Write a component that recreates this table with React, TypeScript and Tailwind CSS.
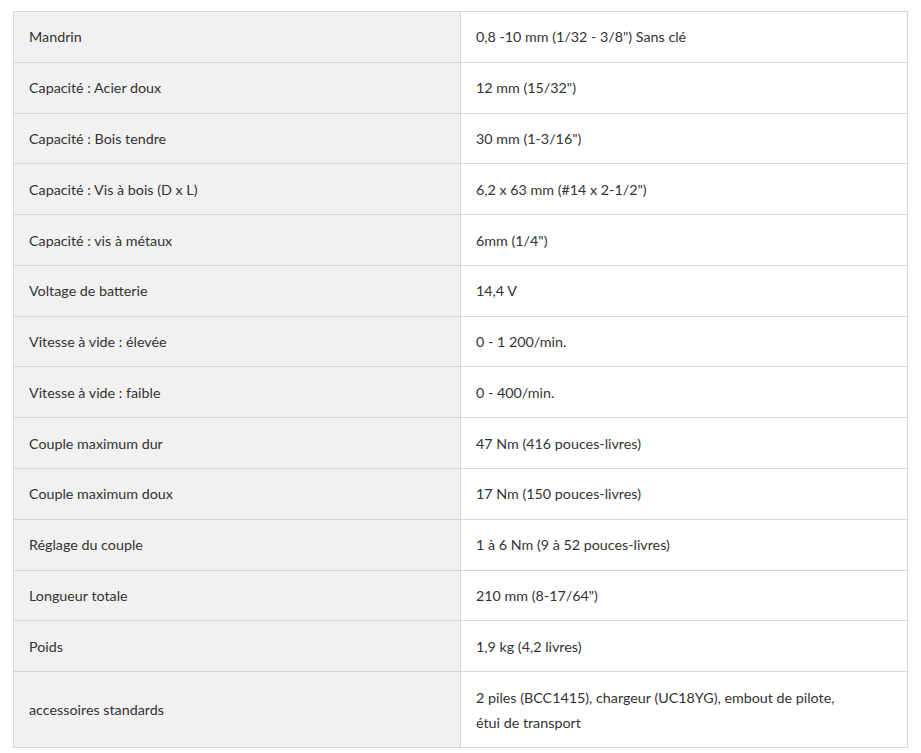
const specs: [string, string][] = [
  ["Mandrin", "0,8 -10 mm (1/32 - 3/8\") Sans clé"],
  ["Capacité : Acier doux", "12 mm (15/32\")"],
  ["Capacité : Bois tendre", "30 mm (1-3/16\")"],
  ["Capacité : Vis à bois (D x L)", "6,2 x 63 mm (#14 x 2-1/2\")"],
  ["Capacité : vis à métaux", "6mm (1/4\")"],
  ["Voltage de batterie", "14,4 V"],
  ["Vitesse à vide : élevée", "0 - 1 200/min."],
  ["Vitesse à vide : faible", "0 - 400/min."],
  ["Couple maximum dur", "47 Nm (416 pouces-livres)"],
  ["Couple maximum doux", "17 Nm (150 pouces-livres)"],
  ["Réglage du couple", "1 à 6 Nm (9 à 52 pouces-livres)"],
  ["Longueur totale", "210 mm (8-17/64\")"],
  ["Poids", "1,9 kg (4,2 livres)"],
  ["accessoires standards", "2 piles (BCC1415), chargeur (UC18YG), embout de pilote, étui de transport"],
];

export default function App() {
  return (
    <div className="bg-white min-h-screen pt-[11px] pl-[13px] font-['Lato',sans-serif] text-[14.3px] leading-[25px] text-[#333]">
      <table className="w-[895px] border-collapse table-fixed">
        <tbody>
          {specs.map(([k, v]) => (
            <tr key={k}>
              <td className="w-1/2 bg-[#f1f1f1] border border-[#d6d6d6] px-[15px] py-[12.4px] align-middle">{k}</td>
              <td className="w-1/2 bg-white border border-[#d6d6d6] pl-[15px] pr-[50px] py-[12.4px] align-middle">{v}</td>
            </tr>
          ))}
        </tbody>
      </table>
    </div>
  );
}
